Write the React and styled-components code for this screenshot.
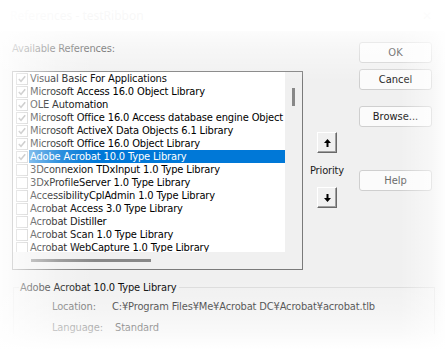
import React from 'react'
import styled, { createGlobalStyle } from 'styled-components'

const GlobalStyle = createGlobalStyle`
  html, body { margin: 0; padding: 0; background: #ffffff; }
  body { font-family: "DejaVu Sans Condensed", "DejaVu Sans", sans-serif; font-size: 11px; letter-spacing: -0.15px; }
`

const Window = styled.div`
  position: relative;
  width: 445px;
  height: 364px;
  overflow: hidden;
  display: flex;
  flex-direction: column;
  background: #f0f0f0;
  color: #000;
`

const TitleBar = styled.div`
  height: 31px;
  flex: none;
  background: #ffffff;
  display: flex;
  align-items: center;
  justify-content: space-between;
  padding: 0 10px;
  box-sizing: border-box;
  font-family: "Noto Sans", sans-serif;
  font-size: 12px;
  letter-spacing: 0;
  color: #c4c4c4;
`

const Close = styled.span`
  font-size: 12px;
  color: #d0d0d0;
  margin-right: 3px;
`

const Body = styled.div`
  flex: 1;
  padding: 11px 0 0 12px;
`

const Main = styled.div`
  display: flex;
`

const LeftCol = styled.div`
  width: 291px;
  display: flex;
  flex-direction: column;
`

const Label = styled.div`
  height: 13px;
  line-height: 13px;
  margin-bottom: 16px;
  color: #1a1a1a;
`

const ListBox = styled.div`
  height: 199px;
  border: 1px solid #7a7a7a;
  box-sizing: border-box;
  background: #fff;
  display: grid;
  grid-template-columns: 1fr 17px;
  grid-template-rows: 1fr 17px;
`

const Rows = styled.div`
  overflow: hidden;
`

const Row = styled.div`
  display: flex;
  align-items: center;
  height: 13px;
  white-space: nowrap;
`

const Check = styled.span`
  flex: none;
  width: 10px;
  height: 10px;
  margin: 0 1px 0 3px;
  border: 1px solid #b9b9b9;
  background: #fff;
  display: flex;
  align-items: center;
  justify-content: center;
`

const RowText = styled.span`
  flex: 1;
  height: 13px;
  line-height: 13px;
  padding-left: 1px;
  background: ${p => (p.$selected ? '#0078d7' : 'transparent')};
  color: ${p => (p.$selected ? '#fff' : '#000')};
  overflow: hidden;
`

const VScroll = styled.div`
  background: #f0f0f0;
  display: flex;
  justify-content: center;
  padding-top: 16px;
`

const VThumb = styled.div`
  width: 3px;
  height: 18px;
  background: #888;
`

const HScroll = styled.div`
  background: #f0f0f0;
  display: flex;
  align-items: center;
  padding-left: 18px;
`

const HThumb = styled.div`
  width: 120px;
  height: 3px;
  background: #888;
`

const Corner = styled.div`
  background: #f0f0f0;
`

const PriorityCol = styled.div`
  width: 48px;
  display: flex;
  flex-direction: column;
  align-items: center;
  padding-top: 90px;
`

const ArrowButton = styled.button`
  width: 20px;
  height: 21px;
  padding: 0;
  background: #f0f0f0;
  border: 1px solid;
  border-color: #ffffff #696969 #696969 #ffffff;
  box-shadow: inset -1px -1px 0 #a0a0a0;
  display: flex;
  align-items: center;
  justify-content: center;
`

const PriorityLabel = styled.div`
  line-height: 13px;
  margin: 11px 0 10px;
  color: #1a1a1a;
`

const ButtonCol = styled.div`
  margin-left: 8px;
  display: flex;
  flex-direction: column;
`

const Button = styled.button`
  width: 73px;
  height: 21px;
  margin-top: ${p => p.$gap || 0}px;
  border: 1px solid #cfcfcf;
  border-radius: 3px;
  background: #fbfbfb;
  font-family: inherit;
  font-size: 11px;
  letter-spacing: 0;
  color: ${p => (p.$dim ? '#6a6a6a' : '#222')};
  padding: 0;
`

const GroupBox = styled.fieldset`
  margin: 11px 10px 0 1px;
  padding: 6px 0 0 38px;
  border: 1px solid #dadada;
  border-bottom: none;
  min-width: 0;
`

const Legend = styled.legend`
  margin-left: -33px;
  padding: 0 2px 0 1px;
  line-height: 13px;
  color: #000;
`

const InfoGrid = styled.div`
  display: grid;
  grid-template-columns: 60px 1fr;
  row-gap: 8px;
  line-height: 13px;
`

const InfoLabel = styled.span`
  color: #555;
`

const InfoValue = styled.span`
  color: #1a1a1a;
  padding-left: ${p => p.$indent || 0}px;
`

const Fade = styled.div`
  position: absolute;
  inset: 0;
  pointer-events: none;
  background:
    linear-gradient(to bottom, rgba(255,255,255,0.95) 0, rgba(255,255,255,0.8) 31px, rgba(255,255,255,0.45) 48px, rgba(255,255,255,0) 82px),
    linear-gradient(to top, #fff 0, #fff 14px, rgba(255,255,255,0.6) 33px, rgba(255,255,255,0.3) 53px, rgba(255,255,255,0) 84px),
    linear-gradient(to right, rgba(255,255,255,0.88) 0, rgba(255,255,255,0.72) 12px, rgba(255,255,255,0.5) 30px, rgba(255,255,255,0.18) 60px, rgba(255,255,255,0) 95px),
    linear-gradient(to left, rgba(255,255,255,0.9) 0, rgba(255,255,255,0.5) 13px, rgba(255,255,255,0) 45px);
`

const refs = [
  ['Visual Basic For Applications', true],
  ['Microsoft Access 16.0 Object Library', true],
  ['OLE Automation', true],
  ['Microsoft Office 16.0 Access database engine Object Library', true],
  ['Microsoft ActiveX Data Objects 6.1 Library', true],
  ['Microsoft Office 16.0 Object Library', true],
  ['Adobe Acrobat 10.0 Type Library', true, true],
  ['3Dconnexion TDxInput 1.0 Type Library', false],
  ['3DxProfileServer 1.0 Type Library', false],
  ['AccessibilityCplAdmin 1.0 Type Library', false],
  ['Acrobat Access 3.0 Type Library', false],
  ['Acrobat Distiller', false],
  ['Acrobat Scan 1.0 Type Library', false],
  ['Acrobat WebCapture 1.0 Type Library', false],
]

const Tick = () => (
  <svg width="8" height="8" viewBox="0 0 8 8">
    <path d="M0.8 4 L3 6.3 L7.2 1.3" fill="none" stroke="#8a8a8a" strokeWidth="1.5" />
  </svg>
)

const Arrow = ({ down }) => (
  <svg width="7" height="8" viewBox="0 0 7 8" style={down ? { transform: 'rotate(180deg)' } : undefined}>
    <path d="M3.5 0 L7 4 L4.5 4 L4.5 8 L2.5 8 L2.5 4 L0 4 Z" fill="#000" />
  </svg>
)

export default function App() {
  return (
    <Window>
      <GlobalStyle />
      <TitleBar>
        <span>References - testRibbon</span>
        <Close>✕</Close>
      </TitleBar>
      <Body>
        <Main>
          <LeftCol>
            <Label>Available References:</Label>
            <ListBox>
              <Rows>
                {refs.map(([name, checked, selected]) => (
                  <Row key={name}>
                    <Check>{checked && <Tick />}</Check>
                    <RowText $selected={selected}>{name}</RowText>
                  </Row>
                ))}
              </Rows>
              <VScroll><VThumb /></VScroll>
              <HScroll><HThumb /></HScroll>
              <Corner />
            </ListBox>
          </LeftCol>
          <PriorityCol>
            <ArrowButton><Arrow /></ArrowButton>
            <PriorityLabel>Priority</PriorityLabel>
            <ArrowButton><Arrow down /></ArrowButton>
          </PriorityCol>
          <ButtonCol>
            <Button>OK</Button>
            <Button $gap={6}>Cancel</Button>
            <Button $gap={16}>Browse...</Button>
            <Button $gap={43} $dim>Help</Button>
          </ButtonCol>
        </Main>
        <GroupBox>
          <Legend>Adobe Acrobat 10.0 Type Library</Legend>
          <InfoGrid>
            <InfoLabel>Location:</InfoLabel>
            <InfoValue>C:¥Program Files¥Me¥Acrobat DC¥Acrobat¥acrobat.tlb</InfoValue>
            <InfoLabel>Language:</InfoLabel>
            <InfoValue $indent={3}>Standard</InfoValue>
          </InfoGrid>
        </GroupBox>
      </Body>
      <Fade />
    </Window>
  )
}
